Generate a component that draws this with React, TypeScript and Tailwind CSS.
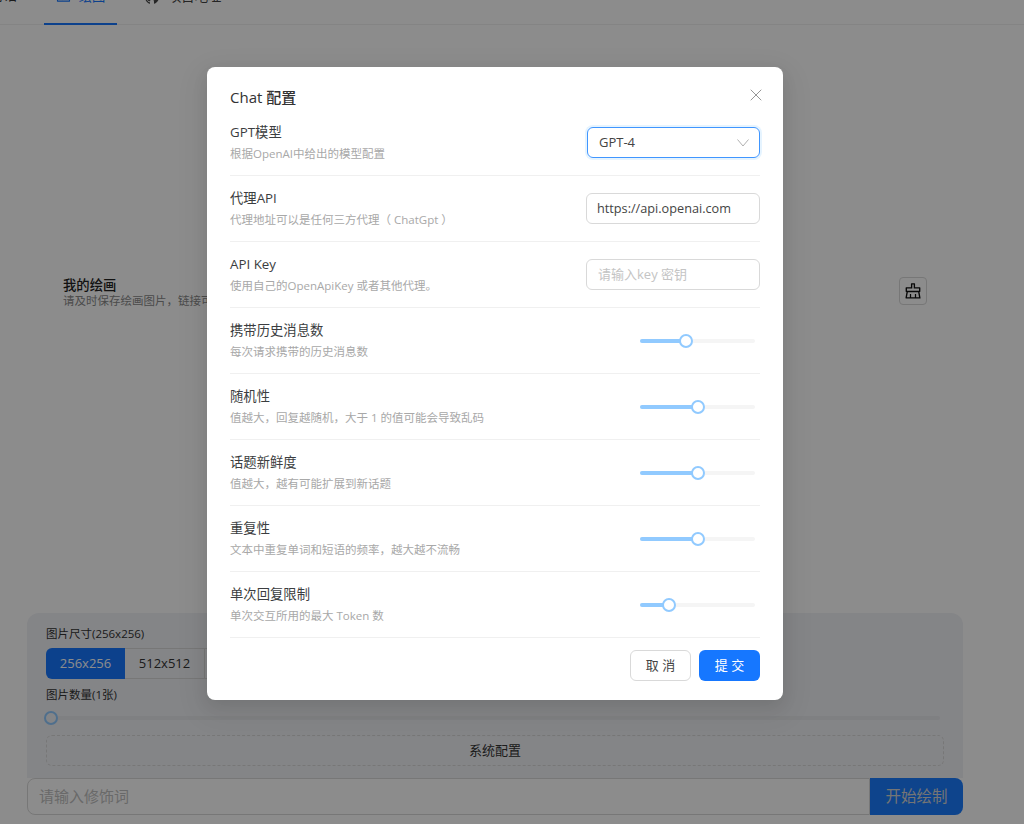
import { AiOutlineClear, AiOutlineGithub, AiOutlinePicture } from 'react-icons/ai';
import { X } from 'lucide-react';

const sliders = [
  { label: '携带历史消息数', desc: '每次请求携带的历史消息数', value: 40 },
  { label: '随机性', desc: '值越大，回复越随机，大于 1 的值可能会导致乱码', value: 50 },
  { label: '话题新鲜度', desc: '值越大，越有可能扩展到新话题', value: 50 },
  { label: '重复性', desc: '文本中重复单词和短语的频率，越大越不流畅', value: 50 },
  { label: '单次回复限制', desc: '单次交互所用的最大 Token 数', value: 25 },
];

function Row({ label, desc, children }: { label: string; desc: string; children: React.ReactNode }) {
  return (
    <div className="flex h-[66px] items-center justify-between border-b border-[#f0f0f0]">
      <div>
        <div className="-mt-[1px] text-[13.33px] leading-[18px] text-[#3b3d40]">{label}</div>
        <div className="mt-[5px] text-[11.5px] leading-[16px] text-[#a8a8a8]">{desc}</div>
      </div>
      {children}
    </div>
  );
}

function Slider({ value }: { value: number }) {
  return (
    <div className="relative mr-[5px] h-[4px] w-[115px] rounded-full bg-[#f5f5f5]">
      <div className="h-full rounded-full bg-[#91caff]" style={{ width: `${value}%` }} />
      <div
        className="absolute top-[-5px] ml-[-7px] h-[14px] w-[14px] rounded-full border-2 border-[#91caff] bg-white"
        style={{ left: `${value}%` }}
      />
    </div>
  );
}

function Page() {
  return (
    <div className="flex h-[824px] flex-col overflow-hidden bg-white">
      <div className="flex h-[25px] shrink-0 border-b border-[#f0f0f0] text-[13.33px] text-[#333]">
        <div className="-mt-[16px] w-[17px] overflow-hidden whitespace-nowrap text-right leading-[22px]" dir="rtl">对话</div>
        <div className="ml-[27px] flex h-[25px] w-[73px] items-start justify-center gap-[8px] border-b-2 border-[#1677ff] text-[#1677ff]">
          <AiOutlinePicture className="-mt-[11px] shrink-0" size={15} />
          <span className="-mt-[15px] leading-[22px]">绘图</span>
        </div>
        <div className="ml-[27px] flex items-start gap-[8px] text-[#444]">
          <AiOutlineGithub className="-mt-[11px] shrink-0" size={16} />
          <span className="-mt-[15px] leading-[22px]">项目地址</span>
        </div>
      </div>

      <div className="mr-[97px] ml-[63px] mt-[252px] flex items-center justify-between">
        <div>
          <div className="text-[13.33px] font-medium leading-[16px] text-[#222]">我的绘画</div>
          <div className="text-[11.5px] leading-[16px] text-[#8a8a8a]">请及时保存绘画图片，链接可能会失效</div>
        </div>
        <div className="mb-[4px] flex h-[28px] w-[28px] items-center justify-center rounded border border-[#d9d9d9]">
          <AiOutlineClear size={20} className="text-[#111]" />
        </div>
      </div>

      <div className="flex-1" />

      <div className="mr-[61px] ml-[27px] h-[165px] rounded-t-xl bg-[#f1f2f6] px-[19px] pt-[13px]">
        <div className="text-[11.5px] leading-[16px] text-[#333]">图片尺寸(256x256)</div>
        <div className="mt-[6px] flex h-[31px] text-[13px] text-[#333]">
          <div className="flex w-[79px] items-center justify-center rounded-l-md bg-[#1677ff] text-white">256x256</div>
          <div className="flex w-[80px] items-center justify-center border-y border-r border-[#d9d9d9]">512x512</div>
          <div className="flex w-[80px] items-center justify-center border-y border-r border-[#d9d9d9]">1024x1024</div>
        </div>
        <div className="mt-[8px] text-[11.5px] leading-[16px] text-[#333]">图片数量(1张)</div>
        <div className="relative mt-[13px] h-[4px] w-[894px] rounded-full bg-[#e8e9ed]">
          <div className="absolute top-[-5px] left-[-2px] h-[14px] w-[14px] rounded-full border-2 border-[#91caff] bg-[#f1f2f6]" />
        </div>
        <div className="mt-[15px] flex h-[31px] w-[898px] items-center justify-center rounded-md border border-dashed border-[#d9d9d9] text-[13px] text-[#333]">
          系统配置
        </div>
      </div>
      <div className="mr-[61px] ml-[27px] mb-[9px] flex h-[37px]">
        <div className="flex flex-1 items-center rounded-l-lg border border-[#d9d9d9] bg-white px-[11px] text-[15px] text-[#bfbfbf]">
          请输入修饰词
        </div>
        <div className="flex w-[93px] items-center justify-center rounded-r-lg bg-[#1a7dff] text-[15.5px] text-[#d5d5d5]">
          开始绘制
        </div>
      </div>
    </div>
  );
}

export default function App() {
  return (
    <div className="relative h-[824px] overflow-hidden font-['Open_Sans','Noto_Sans_CJK_SC',sans-serif]">
      <Page />
      <div className="absolute inset-0 bg-black/45" />
      <div className="absolute top-[67px] left-[207px] h-[633px] w-[576px] rounded-lg bg-white px-[23px] shadow-[0_6px_16px_rgba(0,0,0,0.08),0_9px_28px_8px_rgba(0,0,0,0.05)]">
        <div className="flex h-[43px] items-end justify-between">
          <div className="mb-[1px] text-[15px] font-medium leading-[24px] text-[#333]">Chat 配置</div>
          <X className="absolute top-[18px] right-[17px] text-[#8c8c8c]" size={20} strokeWidth={1.1} />
        </div>
        <Row label="GPT模型" desc="根据OpenAI中给出的模型配置">
          <div className="flex h-[31px] w-[173px] items-center justify-between rounded-md border border-[#4096ff] pr-[10px] pl-[11px] text-[13px] text-[#444] shadow-[0_0_0_2px_rgba(5,145,255,0.1)]">
            GPT-4
            <svg width="12" height="8" viewBox="0 0 12 8" fill="none" stroke="#b0b0b0" strokeWidth="1">
              <path d="M0.5 0.5L6 7L11.5 0.5" />
            </svg>
          </div>
        </Row>
        <Row label="代理API" desc="代理地址可以是任何三方代理（ ChatGpt ）">
          <div className="flex h-[31px] w-[174px] items-center rounded-md border border-[#d9d9d9] px-[10px] text-[12.7px] text-[#444]">
            https://api.openai.com
          </div>
        </Row>
        <Row label="API Key" desc="使用自己的OpenApiKey 或者其他代理。">
          <div className="flex h-[31px] w-[174px] items-center rounded-md border border-[#d9d9d9] px-[11px] text-[13px] text-[#c4c4c4]">
            请输入key 密钥
          </div>
        </Row>
        {sliders.map((item) => (
          <Row key={item.label} label={item.label} desc={item.desc}>
            <Slider value={item.value} />
          </Row>
        ))}
        <div className="mt-[12px] flex justify-end gap-[8px] text-[13px]">
          <div className="flex h-[31px] w-[61px] items-center justify-center rounded-md border border-[#d9d9d9] text-[#444]">取 消</div>
          <div className="flex h-[31px] w-[61px] items-center justify-center rounded-md bg-[#1677ff] text-white">提 交</div>
        </div>
      </div>
    </div>
  );
}
